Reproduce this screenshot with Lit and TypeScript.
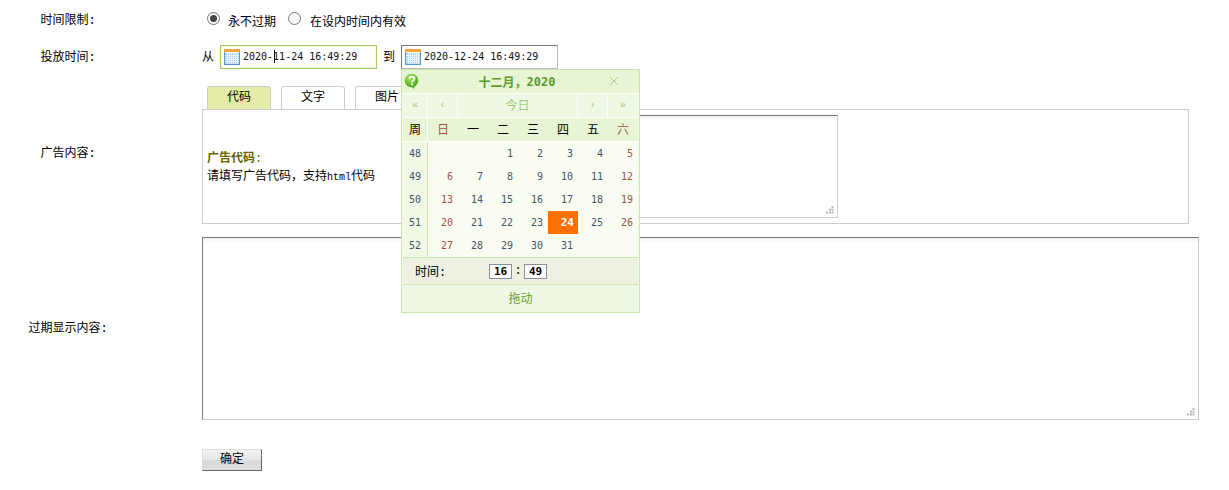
import { LitElement, html, css, svg } from "lit";
import { customElement } from "lit/decorators.js";

const FW_COMMA = "\uFF0C";

const calIcon = () => html`<svg class="cal-ico" width="16" height="16" viewBox="0 0 16 16">
  <rect x="0" y="0" width="16" height="16" fill="#5b97c4"/>
  <rect x="0" y="0" width="16" height="3" fill="#f2a33a"/>
  <rect x="1" y="3" width="14" height="1" fill="#fdfdfd"/>
  <rect x="1" y="4" width="14" height="11" fill="#a9d0ee"/>
  ${[6, 8, 10, 12].map((y) => svg`<rect x="1" y="${y}" width="14" height="1" fill="#e8f3fb"/>`)}
  ${[3, 5, 7, 9, 11, 13].map((x) => svg`<rect x="${x}" y="4" width="1" height="11" fill="#e8f3fb"/>`)}
</svg>`;

const grip = () => html`<svg class="grip" width="8" height="8" viewBox="0 0 8 8" fill="#b8b8b8">
  <rect x="5.5" y="0" width="2" height="2"/>
  <rect x="3" y="2.7" width="2" height="2"/><rect x="5.5" y="2.7" width="2" height="2"/>
  <rect x="0" y="5.5" width="2" height="2"/><rect x="3" y="5.5" width="2" height="2"/><rect x="5.5" y="5.5" width="2" height="2"/>
</svg>`;

const weeks: [number, (number | null)[]][] = [
  [48, [null, null, 1, 2, 3, 4, 5]],
  [49, [6, 7, 8, 9, 10, 11, 12]],
  [50, [13, 14, 15, 16, 17, 18, 19]],
  [51, [20, 21, 22, 23, 24, 25, 26]],
  [52, [27, 28, 29, 30, 31, null, null]],
];

@customElement("app-root")
export class AppRoot extends LitElement {
  static styles = css`
    :host {
      display: block;
      position: relative;
      height: 490px;
      overflow: hidden;
      background: #fff;
      color: #000;
      font: 12px "Liberation Mono", "Noto Sans CJK SC", monospace;
    }
    .form { display: flex; flex-direction: column; padding-top: 8px; }
    .row { display: grid; grid-template-columns: 136px 1fr; column-gap: 66px; align-items: center; }
    .label { text-align: center; }
    .r1 { height: 22px; }
    .r2 { height: 24px; margin-top: 15px; }
    .r2 .label { padding-bottom: 2px; }
    .r3 { height: 138px; margin-top: 17px; }
    .r3 .label { padding-bottom: 6px; }
    .r4 { height: 183px; margin-top: 13px; }
    .r4 .label { padding-bottom: 3px; }
    .r5 { height: 22px; margin-top: 29px; }

    .radios { display: flex; align-items: center; padding-left: 5px; }
    .radio {
      width: 13px; height: 13px; box-sizing: border-box; border-radius: 50%;
      border: 1px solid #777; background: #f8f8f8;
      display: flex; align-items: center; justify-content: center;
      margin-top: -1px;
    }
    .radio.on::after { content: ""; width: 7px; height: 7px; border-radius: 50%; background: #444; }
    .radio-text { margin: 4px 11px 0 8px; }
    .radio-text.last { margin-right: 0; margin-left: 9px; }
    .radio.second { margin-left: 1px; }

    .dates { display: flex; align-items: center; }
    .dates .w { width: 12px; padding-bottom: 2px; }
    .input {
      width: 157px; height: 24px; box-sizing: border-box;
      display: flex; align-items: center; position: relative;
      padding-left: 3px; padding-bottom: 1px;
      border: 1px solid; border-color: #777 #bbb #bbb #777;
      font: 10px "DejaVu Sans Mono", monospace; color: #111;
    }
    .input.focus { border: 1px solid #a4c95e; box-shadow: inset 0 0 0 1px #f3f8e6; margin: 0 6px 0 6px; }
    .w2 { margin-right: 6px; }
    .cal-ico { margin-right: 3px; flex: none; }
    .caret { position: absolute; left: 53px; top: 4px; width: 1px; height: 13px; background: #000; }

    .tabs { display: flex; gap: 10px; padding-left: 5px; height: 23px; }
    .tab {
      width: 64px; box-sizing: border-box; text-align: center; line-height: 22px;
      border: 1px solid #ccc; border-bottom: 0; border-radius: 3px 3px 0 0; background: #fff;
    }
    .tab.active { background: #e5eca8; }
    .box {
      width: 987px; height: 115px; box-sizing: border-box;
      border: 1px solid #ccc; padding: 5px 0 5px 4px;
      display: flex; align-items: center; gap: 5px;
    }
    .help { width: 191px; line-height: 18px; flex: none; padding-top: 4px; }
    .help b { color: #666600; font-weight: 700; }
    .help .colon { color: #666600; }
    .help .lat { font-size: 10px; }
    .area {
      position: relative; box-sizing: border-box; background: linear-gradient(#f1f1f1, #fff 5px);
      border: 1px solid; border-color: #777 #ccc #ccc #ccc;
    }
    .small { width: 435px; height: 103px; }
    .big { width: 997px; height: 183px; border-left-color: #777; }
    .grip { position: absolute; right: 3px; bottom: 3px; }

    .btn {
      width: 60px; height: 22px; box-sizing: border-box; text-align: center; line-height: 20px;
      border: 1px solid; border-color: #ddd #666 #666 #ddd;
      background: linear-gradient(#f2f2f2, #e6e6e6 50%, #dadada 50%, #dedede);
    }

    .cal {
      position: absolute; left: 401px; top: 69px; width: 239px; height: 244px; box-sizing: border-box;
      border: 1px solid #cbe6ac; padding: 0 1px; background: #f3fae9;
      display: flex; flex-direction: column; color: #000;
    }
    .title {
      height: 23px; flex: none; background: #e7f5d5; margin: 0 -1px; position: relative;
      display: flex; align-items: center; justify-content: center; padding-right: 7px;
      color: #5e9a2c; font-weight: 700; font-size: 12px; border-bottom: 1px solid #fff;
      font-family: "Noto Sans CJK SC", sans-serif;
    }
    .title .yr { font: 700 12px "DejaVu Sans Mono", monospace; }
    .help-ico { position: absolute; left: 2px; top: 3px; }
    .close { position: absolute; left: 206px; top: 5px; }
    .nav {
      height: 23px; flex: none; display: grid; grid-template-columns: 24px 29px 119px 29px 30px;
      column-gap: 1px; background: #fff; border-bottom: 1px solid #fff;
      color: #9ecb73; font-size: 10px;
    }
    .nav > div { background: #eef8e4; display: flex; align-items: center; justify-content: center; }
    .nav .today { font: 12px "Noto Sans CJK SC", sans-serif; padding-bottom: 2px; box-sizing: border-box; }
    .head { height: 23px; flex: none; display: grid; grid-template-columns: 24px 1px repeat(7, 30px); background: #e7f5d5; border-bottom: 1px solid #fff; }
    .head > div { display: flex; align-items: center; justify-content: center; font: 12px "Noto Sans CJK SC", sans-serif; padding-bottom: 3px; box-sizing: border-box; }
    .head .sep { background: #fff; padding: 0; }
    .head .we { color: #a4504a; }
    .head .sat { color: #a07060; }
    .grid { height: 115px; flex: none; display: grid; grid-template-columns: 24px 1px repeat(7, 30px); grid-auto-rows: 23px; background: #f9fdf1; }
    .grid > div { display: flex; align-items: center; font: 10px "DejaVu Sans Mono", monospace; color: #44546a; }
    .grid .wk { background: #eff9e5; justify-content: center; }
    .grid .sep { background: #cbe6ac; }
    .grid .d { justify-content: flex-end; padding-right: 5px; }
    .grid .we { color: #a4504a; }
    .grid .cur { background: #ff7000; color: #fff; font: 700 11px "DejaVu Sans Mono", monospace; padding-right: 4px; }
    .time {
      height: 26px; flex: none; display: flex; align-items: center; background: #eef1e2;
      border-top: 1px solid #cbe6ac; border-bottom: 1px solid #cbe6ac;
      padding-left: 12px; margin: 0;
    }
    .time .cap { width: 74px; }
    .spin {
      width: 23px; height: 15px; box-sizing: border-box; border: 1px solid #8a8aa0; background: #fff;
      display: flex; align-items: center; justify-content: center;
      font: 700 11px "DejaVu Sans Mono", monospace;
    }
    .time .sc { width: 12px; text-align: center; }
    .foot { flex: 1; display: flex; align-items: center; justify-content: center; color: #6a9c34; background: #eef8e4; margin: 0 -1px; padding-bottom: 2px; font: 12px "Noto Sans CJK SC", sans-serif; }
  `;

  render() {
    return html`
      <div class="form">
        <div class="row r1">
          <div class="label">时间限制:</div>
          <div class="radios">
            <span class="radio on"></span><span class="radio-text">永不过期</span>
            <span class="radio second"></span><span class="radio-text last">在设内时间内有效</span>
          </div>
        </div>
        <div class="row r2">
          <div class="label">投放时间:</div>
          <div class="dates">
            <span class="w">从</span>
            <div class="input focus">${calIcon()}2020-11-24 16:49:29<span class="caret"></span></div>
            <span class="w w2">到</span>
            <div class="input">${calIcon()}2020-12-24 16:49:29</div>
          </div>
        </div>
        <div class="row r3">
          <div class="label">广告内容:</div>
          <div>
            <div class="tabs">
              <div class="tab active">代码</div>
              <div class="tab">文字</div>
              <div class="tab">图片</div>
            </div>
            <div class="box">
              <div class="help"><b>广告代码</b><span class="colon">:</span><br />请填写广告代码${FW_COMMA}支持<span class="lat">html</span>代码</div>
              <div class="area small">${grip()}</div>
            </div>
          </div>
        </div>
        <div class="row r4">
          <div class="label">过期显示内容:</div>
          <div class="area big">${grip()}</div>
        </div>
        <div class="row r5">
          <div></div>
          <div class="btn">确定</div>
        </div>
      </div>

      <div class="cal">
        <div class="title">
          <svg class="help-ico" width="16" height="17" viewBox="0 0 16 17">
            <defs><radialGradient id="hg" cx="40%" cy="30%" r="75%"><stop offset="0" stop-color="#a6e65a"/><stop offset="1" stop-color="#3fa51c"/></radialGradient></defs>
            <path d="M6 12l4 4 .5-4z" fill="#3fa51c"/>
            <circle cx="7.500" cy="7.500" r="6.800" fill="url(#hg)"/>
            <path d="M5.400 5.800c.2-3 5-3 5 0 0 1.800-2.300 1.800-2.300 3.400" fill="none" stroke="#fff" stroke-width="1.800"/>
            <rect x="7.100" y="10.300" width="2" height="2" fill="#fff"/>
          </svg>
          十二月${FW_COMMA}<span class="yr">2020</span>
          <svg class="close" width="12" height="12" viewBox="0 0 12 12"><path d="M2 2l8 8M10 2l-8 8" stroke="#a8d286" stroke-width="1" fill="none"/></svg>
        </div>
        <div class="nav">
          <div>«</div><div>‹</div><div class="today">今日</div><div>›</div><div>»</div>
        </div>
        <div class="head">
          <div>周</div><div class="sep"></div>
          <div class="we">日</div><div>一</div><div>二</div><div>三</div><div>四</div><div>五</div><div class="sat">六</div>
        </div>
        <div class="grid">
          ${weeks.map(
            ([w, days]) => html`
              <div class="wk">${w}</div>
              <div class="sep"></div>
              ${days.map((d, i) => {
                const cls = ["d", i === 0 || i === 6 ? "we" : "", d === 24 ? "cur" : ""].join(" ");
                return html`<div class=${cls}>${d ?? ""}</div>`;
              })}
            `
          )}
        </div>
        <div class="time">
          <span class="cap">时间:</span>
          <span class="spin">16</span><span class="sc">:</span><span class="spin">49</span>
        </div>
        <div class="foot">拖动</div>
      </div>
    `;
  }
}
